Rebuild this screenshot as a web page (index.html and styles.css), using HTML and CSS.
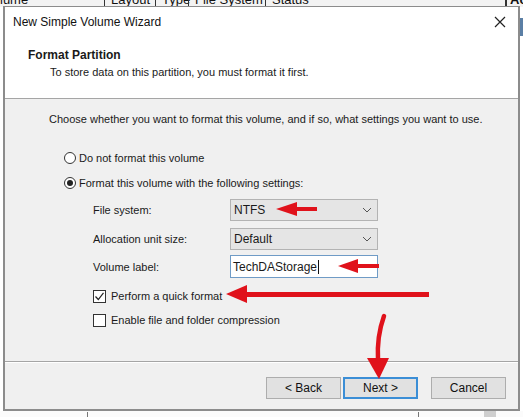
FILE: index.html
```html
<!DOCTYPE html>
<html>
<head>
<meta charset="utf-8">
<link rel="stylesheet" href="styles.css">
</head>
<body>
<div class="desk">
  <div class="bg-head">
    <div class="bg-cols">
      <span class="c0">lume</span><span class="sep s1"></span><span class="c1">Layout</span><span class="sep s2"></span><span class="c2">Type</span><span class="sep s3"></span><span class="c3">File System</span><span class="sep s4"></span><span class="c4">Status</span><span class="sep s5"></span><span class="c5">Ac</span>
    </div>
  </div>
  <div class="bg-side"></div>
  <div class="bg-foot"><span class="fl f1"></span><span class="fl f2"></span><span class="fblock"></span></div>

  <div class="dialog">
    <div class="header">
      <div class="titlebar">
        <span class="title">New Simple Volume Wizard</span>
        <svg class="close" width="12" height="12" viewBox="0 0 12 12"><path d="M1 1 L11 11 M11 1 L1 11" stroke="#222" stroke-width="1.2" fill="none"/></svg>
      </div>
      <div class="info">
        <div class="info-title">Format Partition</div>
        <div class="info-sub">To store data on this partition, you must format it first.</div>
      </div>
    </div>
    <div class="body">
      <p class="intro">Choose whether you want to format this volume, and if so, what settings you want to use.</p>
      <div class="radio-row first"><span class="radio"></span><span>Do not format this volume</span></div>
      <div class="radio-row"><span class="radio on"></span><span>Format this volume with the following settings:</span></div>
      <div class="form">
        <div class="frow r1">
          <span class="lbl">File system:</span>
          <div class="combo"><span>NTFS</span><svg width="10" height="6" viewBox="0 0 10 6"><path d="M1 1 L5 5 L9 1" stroke="#555" stroke-width="1" fill="none"/></svg></div>
        </div>
        <div class="frow r2">
          <span class="lbl">Allocation unit size:</span>
          <div class="combo"><span>Default</span><svg width="10" height="6" viewBox="0 0 10 6"><path d="M1 1 L5 5 L9 1" stroke="#555" stroke-width="1" fill="none"/></svg></div>
        </div>
        <div class="frow r3">
          <span class="lbl">Volume label:</span>
          <div class="textbox"><span>TechDAStorage</span><span class="caret"></span></div>
        </div>
      </div>
      <div class="check-row c-first"><span class="check on"><svg width="11" height="11" viewBox="0 0 11 11"><path d="M1.5 5.5 L4.3 8.5 L9.5 1.8" stroke="#222" stroke-width="1.2" fill="none"/></svg></span><span>Perform a quick format</span></div>
      <div class="check-row"><span class="check"></span><span>Enable file and folder compression</span></div>
    </div>
    <div class="footer">
      <button class="btn">&lt; Back</button>
      <button class="btn next">Next &gt;</button>
      <button class="btn cancel">Cancel</button>
    </div>
  </div>

  <svg class="arrows" width="523" height="417" viewBox="0 0 523 417">
    <g fill="#e0121b" stroke="none">
      <polygon points="276,209 297,202 297,216"/>
      <rect x="295" y="207" width="22" height="4"/>
      <polygon points="338,266 358,259 358,273"/>
      <rect x="356" y="264" width="23" height="4"/>
      <polygon points="226,294 247,285 247,303"/>
      <rect x="245" y="292" width="184" height="5"/>
      <polygon points="367,358 389,358 379,379"/>
    </g>
    <path d="M384 316 C 379 330, 377 342, 378 360" stroke="#e0121b" stroke-width="4.5" fill="none" stroke-linecap="round"/>
  </svg>
</div>
</body>
</html>
```
FILE: styles.css
```css
* { box-sizing: border-box; }
html, body { margin: 0; padding: 0; }
body {
  width: 523px;
  height: 417px;
  overflow: hidden;
  background: #ffffff;
  font-family: "Liberation Sans", Arial, sans-serif;
  font-size: 12px;
  color: #1a1a1a;
}
.desk {
  position: relative;
  width: 523px;
  height: 417px;
  overflow: hidden;
  background: #ffffff;
}
.bg-head {
  height: 7px;
  background: #f3f3f3;
  overflow: hidden;
}
.bg-cols {
  position: relative;
  margin-top: -7px;
  height: 14px;
  font-size: 13px;
  line-height: 14px;
  color: #111;
}
.bg-cols span { position: absolute; top: 0; }
.c0 { left: 0; }
.c1 { left: 111px; }
.c2 { left: 162px; }
.c3 { left: 195px; }
.c4 { left: 272px; }
.c5 { left: 510px; font-weight: bold; }
.sep { width: 1px; height: 14px; background: #333; }
.s1 { left: 104px; }
.s2 { left: 155px; }
.s3 { left: 188px; }
.s4 { left: 265px; }
.s5 { left: 505px; width: 2px; }
.bg-side {
  position: absolute;
  right: 0;
  top: 18px;
  width: 3px;
  height: 18px;
  background: #5b7fa5;
}
.bg-foot {
  position: absolute;
  left: 0;
  top: 411px;
  width: 523px;
  height: 6px;
  background: #fbfbfb;
}
.fl { position: absolute; top: 1px; width: 1px; height: 6px; background: #777; }
.f1 { left: 87px; }
.f2 { left: 418px; }
.fblock { position: absolute; left: 484px; top: 0; width: 12px; height: 6px; background: #cfcfcf; }

.dialog {
  position: absolute;
  left: 3px;
  top: 6px;
  width: 517px;
  height: 405px;
  border: 2px solid #8c8c8c;
  border-top-width: 1px;
  background: #f0f0f0;
  display: flex;
  flex-direction: column;
}
.header {
  background: #ffffff;
  border-bottom: 1px solid #a5a5a5;
  height: 92px;
}
.titlebar {
  height: 30px;
  display: flex;
  align-items: center;
  justify-content: space-between;
  padding: 0 12px 0 8px;
}
.title { font-size: 12px; color: #111; }
.close { display: block; }
.info { padding: 11px 0 0 23px; }
.info-title { font-weight: bold; line-height: 14px; font-size: 12px; }
.info-sub { margin-top: 3px; padding-left: 22px; line-height: 14px; font-size: 11px; }

.body {
  height: 263px;
  padding: 13px 0 0 44px;
  border-bottom: 1px solid #a5a5a5;
  font-size: 11px;
}
.intro { margin: 0; line-height: 14px; }
.radio-row {
  display: flex;
  align-items: center;
  gap: 3px;
  height: 14px;
  margin-top: 11px;
  padding-left: 15px;
}
.radio-row.first { margin-top: 25px; }
.radio {
  width: 12px;
  height: 12px;
  border: 1px solid #333;
  border-radius: 50%;
  background: #fff;
  display: flex;
  align-items: center;
  justify-content: center;
}
.radio.on::after {
  content: "";
  width: 6px;
  height: 6px;
  border-radius: 50%;
  background: #222;
}
.form { padding-left: 44px; margin-top: 9px; }
.frow {
  display: grid;
  grid-template-columns: 137px 148px;
  align-items: center;
}
.r1 { height: 22px; }
.r2 { height: 22px; margin-top: 7px; }
.r3 { height: 23px; margin-top: 5px; }
.lbl { line-height: 14px; }
.combo {
  height: 22px;
  background: #e5e5e5;
  border: 1px solid #b3b3b3;
  display: flex;
  align-items: center;
  justify-content: space-between;
  padding: 0 5px 0 3px;
  font-size: 12px;
}
.combo svg { display: block; }
.textbox {
  height: 23px;
  background: #fff;
  border: 1px solid #6f9bc6;
  display: flex;
  align-items: center;
  padding: 0 2px;
  font-size: 12px;
}
.caret { width: 1px; height: 14px; background: #111; margin-left: 1px; }
.check-row {
  display: flex;
  align-items: center;
  gap: 5px;
  height: 14px;
  margin-top: 10px;
  padding-left: 44px;
}
.check-row.c-first { margin-top: 11px; }
.check {
  width: 13px;
  height: 13px;
  border: 1px solid #333;
  background: #fff;
  display: flex;
  align-items: center;
  justify-content: center;
}
.check svg { display: block; }

.footer {
  flex: 1;
  border-top: 1px solid #ffffff;
  display: flex;
  align-items: flex-start;
  padding: 14px 0 0 261px;
}
.btn {
  width: 75px;
  height: 22px;
  background: #e1e1e1;
  border: 1px solid #adadad;
  font-family: "Liberation Sans", Arial, sans-serif;
  font-size: 12px;
  color: #111;
  padding: 0;
}
.btn.next { margin-left: 2px; border: 2px solid #3b8ed6; }
.btn.cancel { margin-left: 13px; }
.arrows { position: absolute; left: 0; top: 0; pointer-events: none; }
```
